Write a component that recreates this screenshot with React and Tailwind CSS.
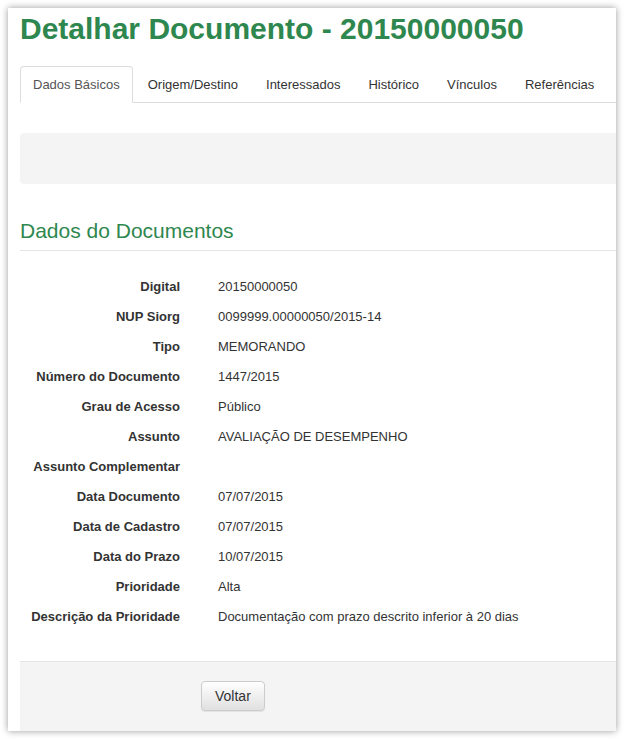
import React from 'react';

const tabs = ['Dados Básicos', 'Origem/Destino', 'Interessados', 'Histórico', 'Vínculos', 'Referências'];

const rows = [
    ['Digital', '20150000050'],
    ['NUP Siorg', '0099999.00000050/2015-14'],
    ['Tipo', 'MEMORANDO'],
    ['Número do Documento', '1447/2015'],
    ['Grau de Acesso', 'Público'],
    ['Assunto', 'AVALIAÇÃO DE DESEMPENHO'],
    ['Assunto Complementar', ''],
    ['Data Documento', '07/07/2015'],
    ['Data de Cadastro', '07/07/2015'],
    ['Data do Prazo', '10/07/2015'],
    ['Prioridade', 'Alta'],
    ['Descrição da Prioridade', 'Documentação com prazo descrito inferior à 20 dias'],
];

export default function App() {
    return (
        <div className="min-h-[739px] bg-white p-2 font-['Liberation_Sans',Arial,sans-serif] text-[#333]">
            <div className="h-[723px] overflow-hidden bg-white pl-3 shadow-[0_0_7px_rgba(0,0,0,0.4)]">
                <div className="w-[640px]">
                    {/* Page title */}
                    <h1 className="pt-1 text-[30px] font-bold leading-[33px] text-[#2e874e]">
                        Detalhar Documento - 20150000050
                    </h1>

                    {/* Tabs */}
                    <ul className="mt-[21px] flex border-b border-[#ddd]">
                        {tabs.map((tab, i) => (
                            <li key={tab} className="-mb-px mr-[2px]">
                                <a
                                    className={
                                        i === 0
                                            ? 'block rounded-t-[4px] border border-[#ddd] border-b-transparent bg-white px-3 py-[9px] text-[13px] leading-[17px] text-[#555]'
                                            : 'block rounded-t-[4px] border border-transparent px-3 py-[9px] text-[13px] leading-[17px] text-[#333]'
                                    }
                                >
                                    {tab}
                                </a>
                            </li>
                        ))}
                    </ul>

                    {/* Empty well */}
                    <div className="mt-[30px] h-[51px] rounded-[4px] bg-[#f4f4f4]"></div>

                    {/* Section heading */}
                    <h2 className="mt-[35px] border-b border-[#e5e5e5] pb-[8px] text-[21px] leading-[23px] text-[#2e874e]">
                        Dados do Documentos
                    </h2>

                    {/* Detail rows */}
                    <dl className="mt-[21px] grid grid-cols-[160px_1fr] gap-x-[38px] text-[13px] leading-[20px]">
                        {rows.map(([label, value]) => (
                            <React.Fragment key={label}>
                                <dt className="py-[5px] text-right font-bold">{label}</dt>
                                <dd className="py-[5px]">{value}</dd>
                            </React.Fragment>
                        ))}
                    </dl>

                    {/* Form actions */}
                    <div className="mt-[29px] h-[80px] border-t border-[#e5e5e5] bg-[#f4f4f4] pl-[181px] pt-[19px]">
                        <button className="h-[30px] rounded-[4px] border border-[#ccc] bg-gradient-to-b from-white to-[#e0e0e0] px-[13px] text-[14px] text-[#333] shadow-[inset_0_1px_0_rgba(255,255,255,0.15),0_1px_1px_rgba(0,0,0,0.075)]">
                            Voltar
                        </button>
                    </div>
                </div>
            </div>
        </div>
    );
}
